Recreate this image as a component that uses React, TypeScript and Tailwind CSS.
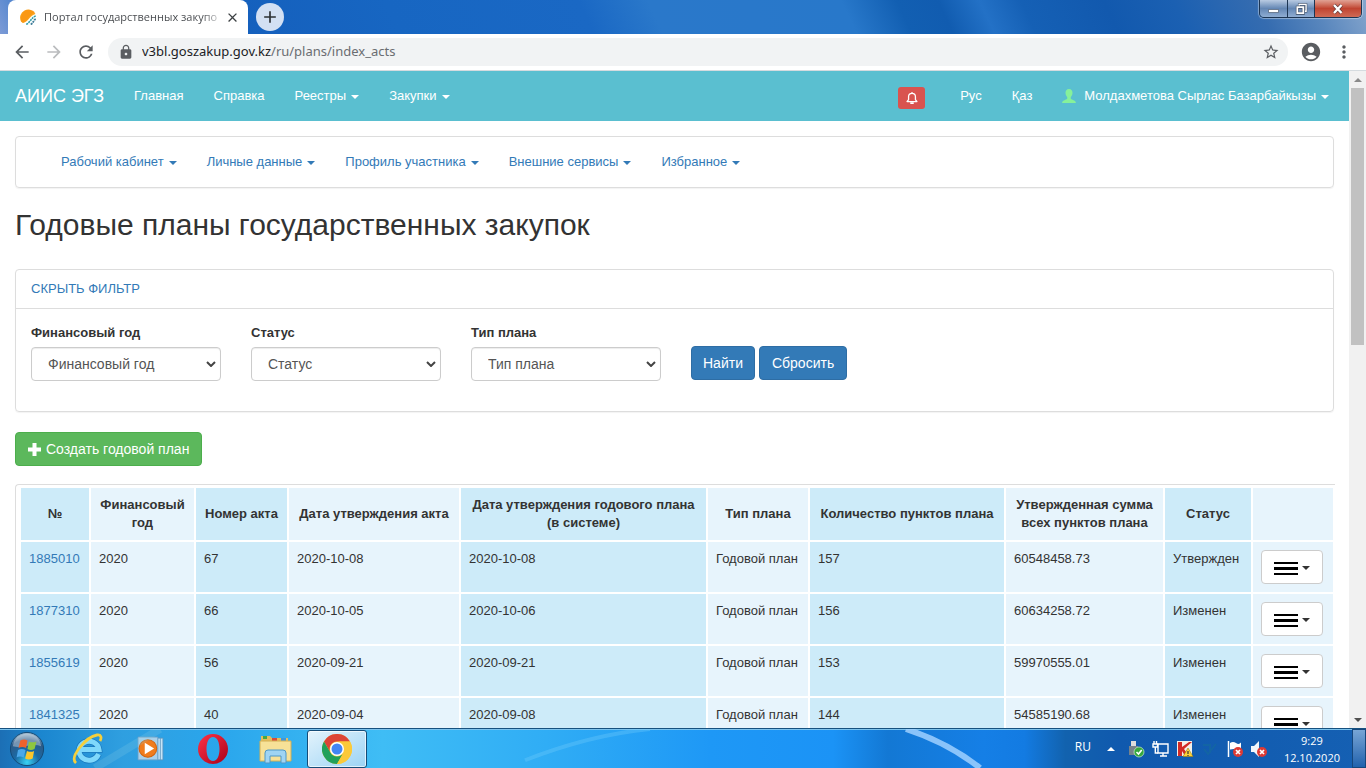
import React from "react";
import {
  MdArrowBack,
  MdArrowForward,
  MdRefresh,
  MdLock,
  MdStarBorder,
  MdAccountCircle,
  MdMoreVert,
  MdClose,
  MdAdd,
} from "react-icons/md";

function Caret({ className = "" }: { className?: string }) {
  return (
    <svg viewBox="0 0 8 4" className={"h-1 w-2 shrink-0 " + className} aria-hidden="true">
      <path d="M0 0h8L4 4z" fill="currentColor" />
    </svg>
  );
}

function BrowserTabs() {
  return (
    <header className="flex h-[34px] shrink-0 bg-[linear-gradient(65deg,#7d9bd6_0%,#3f7ccb_3%,#1560bd_18%,#1766c2_29%,#1a68c4_43%,#2a78ca_48%,#2878ca_62%,#125fb2_66%,#115cb0_69%,#2371c6_72%,#1560b5_75%,#1259ae_81%,#1b60b2_86%,#356cb0_92%,#5886bd_96%,#86a6cd_100%)]">
      <div className="ml-2 flex w-60 items-center rounded-t-lg bg-white pl-3 pr-2">
        <svg viewBox="0 0 16 16" className="h-4 w-4 shrink-0" aria-hidden="true">
          <path d="M1 12.500A8 8 0 1 1 15.500 5C10 6 8.500 13 3 14z" fill="#fba31c" />
          <path d="M1 12.500C0-1 12-1 15 3.500 9 5 8 12 3 14z" fill="#f9900f" opacity=".55" />
          <path d="M15.700 7c-4 1-5 6-9.500 8.500" stroke="#2b9aa5" strokeWidth="1.600" strokeDasharray="2 .7" fill="none" />
          <path d="M15.700 10c-2 1-2.500 4-5 5.500" stroke="#3f7e9a" strokeWidth="1.800" strokeDasharray="2 .7" fill="none" />
        </svg>
        <span className="ml-2 flex-1 whitespace-nowrap bg-linear-to-r from-[#45484c] from-90% to-[#45484c33] bg-clip-text text-[11px] text-transparent">
          Портал государственных закупо
        </span>
        <button type="button" aria-label="Закрыть вкладку" className="ml-1 grid h-4 w-4 shrink-0 place-items-center text-[#3c4043]">
          <MdClose size={15} />
        </button>
      </div>
      <button type="button" aria-label="Новая вкладка" className="ml-2 mt-[3px] grid h-7 w-7 place-items-center rounded-full bg-[#d3e0f3] text-[#2d3034]">
        <MdAdd size={20} />
      </button>
      <div className="ml-auto mr-1 flex h-[18px] overflow-hidden rounded-b-[5px] border border-t-0 border-[#1c3553] text-white shadow-[0_0_1px_1px_#ffffff66]">
        <button type="button" aria-label="Свернуть" className="grid w-7 place-items-center border-r border-[#1c3553] bg-linear-to-b from-[#b9cbe2] via-[#6487b4] to-[#8fadd2]">
          <svg viewBox="0 0 14 12" className="h-3 w-3.5"><path d="M1.500 6.500h10v3h-10z" fill="#fff" stroke="#4c5c73" strokeWidth=".7" /></svg>
        </button>
        <button type="button" aria-label="Свернуть в окно" className="grid w-[27px] place-items-center border-r border-[#1c3553] bg-linear-to-b from-[#b9cbe2] via-[#6487b4] to-[#8fadd2]">
          <svg viewBox="0 0 14 13" className="h-3 w-3.5" fill="none">
            <path d="M5 3V1.500h7.500V9H11" stroke="#3f4d62" strokeWidth="2.600" />
            <path d="M5 3V1.500h7.500V9H11" stroke="#fff" strokeWidth="1.500" />
            <path d="M3 4.500h6.500v6.500H3z" stroke="#3f4d62" strokeWidth="3.200" />
            <path d="M3 4.500h6.500v6.500H3z" stroke="#fff" strokeWidth="1.900" />
          </svg>
        </button>
        <button type="button" aria-label="Закрыть" className="grid w-[46px] place-items-center bg-linear-to-b from-[#e0a294] via-[#c04431] to-[#cf6a55]">
          <svg viewBox="0 0 14 12" className="h-3 w-3.5">
            <path d="M3 2l7.500 8M10.500 2L3 10" stroke="#5c3a3a" strokeWidth="3.600" />
            <path d="M3 2l7.500 8M10.500 2L3 10" stroke="#fff" strokeWidth="2.400" />
          </svg>
        </button>
      </div>
    </header>
  );
}

function AddressBar() {
  return (
    <div className="flex h-[37px] shrink-0 items-center border-b border-[#d5dbdf] bg-white pl-3 pr-3 text-[#5a5d61]">
      <button type="button" aria-label="Назад"><MdArrowBack size={20} /></button>
      <button type="button" aria-label="Вперёд" className="ml-3 text-[#babcbe]"><MdArrowForward size={20} /></button>
      <button type="button" aria-label="Обновить" className="ml-3"><MdRefresh size={20} /></button>
      <div className="ml-3 flex h-7 min-w-0 flex-1 items-center rounded-full bg-[#f1f3f4] pl-2.5 pr-2">
        <MdLock size={16} className="shrink-0" />
        <div className="ml-2 min-w-0 flex-1 truncate font-['Noto_Sans',sans-serif] text-[13px] text-[#6a6d71]">
          <span className="text-[#202124]">v3bl.goszakup.gov.kz</span>/ru/plans/index_acts
        </div>
        <button type="button" aria-label="Добавить в закладки"><MdStarBorder size={18} /></button>
      </div>
      <button type="button" aria-label="Профиль" className="ml-3"><MdAccountCircle size={22} /></button>
      <button type="button" aria-label="Меню" className="ml-3"><MdMoreVert size={20} /></button>
    </div>
  );
}

function SiteNav() {
  return (
    <nav className="flex h-[50px] items-center bg-[#5abfd0] px-[15px] text-[13px] text-white">
      <a href="#" className="text-lg">АИИС ЭГЗ</a>
      <a href="#" className="ml-[30px]">Главная</a>
      <a href="#" className="ml-[30px]">Справка</a>
      <a href="#" className="ml-[30px] flex items-center">Реестры<Caret className="ml-[5px] mt-0.5" /></a>
      <a href="#" className="ml-[30px] flex items-center">Закупки<Caret className="ml-[5px] mt-0.5" /></a>
      <a href="#" aria-label="Уведомления" className="ml-auto mt-1 grid h-[22px] w-[27px] place-items-center rounded-[3px] bg-[#d9534f]">
        <svg viewBox="0 0 14 16" className="h-3.5 w-3" fill="none" stroke="#fff" strokeWidth="1.500" aria-hidden="true">
          <path d="M7 1v1.500M1.200 12.200h11.600L11 9.800V6.500a4 4 0 0 0-8 0v3.300z" strokeLinejoin="round" />
          <path d="M5 14h4" strokeWidth="2" />
        </svg>
      </a>
      <a href="#" className="ml-[35px]">Рус</a>
      <a href="#" className="ml-[30px]">Қаз</a>
      <a href="#" className="ml-[30px] mr-[5px] flex items-center">
        <svg viewBox="0 0 14 14" className="mr-2 h-3.5 w-3.5" aria-hidden="true">
          <path d="M7 0c2.400 0 3.600 1.700 3.500 4-.1 1.800-.8 3.200-1.700 4v1.500c0 .7 1 .9 2.200 1.400 1.600.6 2.700.9 2.900 3.100H.1c.2-2.200 1.300-2.500 2.900-3.100 1.200-.5 2.200-.7 2.200-1.400V8c-.9-.8-1.600-2.200-1.700-4C3.400 1.700 4.600 0 7 0z" fill="#86f19a" />
        </svg>
        Молдахметова Сырлас Базарбайкызы<Caret className="ml-[5px] mt-0.5" />
      </a>
    </nav>
  );
}

const cabinetLinks = ["Рабочий кабинет", "Личные данные", "Профиль участника", "Внешние сервисы", "Избранное"];

const filters = [
  { id: "year", label: "Финансовый год" },
  { id: "status", label: "Статус" },
  { id: "type", label: "Тип плана" },
];

function FilterPanel() {
  return (
    <section className="mt-[26px] h-[143px] rounded border border-[#ddd] shadow-[0_1px_1px_#0000000d]">
      <div className="flex h-[39px] items-center border-b border-[#ddd] px-[15px]">
        <a href="#" className="text-[13px] leading-[18px] text-[#337ab7]">СКРЫТЬ ФИЛЬТР</a>
      </div>
      <form className="flex gap-[30px] px-[15px] pt-[15px]" onSubmit={(e) => e.preventDefault()}>
        {filters.map((f) => (
          <div key={f.id} className="w-[190px]">
            <label htmlFor={f.id} className="block text-[13px] leading-[18px] font-bold">{f.label}</label>
            <div className="relative mt-[5px]">
              <select id={f.id} className="block h-[34px] w-full appearance-none rounded border border-[#ccc] bg-white pl-4 text-sm text-[#555] shadow-[inset_0_1px_1px_#00000013]">
                <option>{f.label}</option>
              </select>
              <svg viewBox="0 0 10 6" className="pointer-events-none absolute right-[5px] top-3.5 h-1.5 w-2.5" fill="none" aria-hidden="true">
                <path d="M1 1l4 4 4-4" stroke="#444" strokeWidth="2" />
              </svg>
            </div>
          </div>
        ))}
        <div className="mt-[22px] flex h-[34px] gap-1">
          <button type="submit" className="rounded border border-[#2e6da4] bg-[#337ab7] px-[11px] text-sm text-white">Найти</button>
          <button type="reset" className="rounded border border-[#2e6da4] bg-[#337ab7] px-3 text-sm text-white">Сбросить</button>
        </div>
      </form>
    </section>
  );
}

const columns = [
  { title: "№", width: 68 },
  { title: "Финансовый год", width: 103 },
  { title: "Номер акта", width: 91 },
  { title: "Дата утверждения акта", width: 170 },
  { title: "Дата утверждения годового плана (в системе)", width: 245 },
  { title: "Тип плана", width: 100 },
  { title: "Количество пунктов плана", width: 194 },
  { title: "Утвержденная сумма всех пунктов плана", width: 157 },
  { title: "Статус", width: 86 },
  { title: "", width: 80 },
];

const rows = [
  ["1885010", "2020", "67", "2020-10-08", "2020-10-08", "Годовой план", "157", "60548458.73", "Утвержден"],
  ["1877310", "2020", "66", "2020-10-05", "2020-10-06", "Годовой план", "156", "60634258.72", "Изменен"],
  ["1855619", "2020", "56", "2020-09-21", "2020-09-21", "Годовой план", "153", "59970555.01", "Изменен"],
  ["1841325", "2020", "40", "2020-09-04", "2020-09-08", "Годовой план", "144", "54585190.68", "Изменен"],
];

function PlansTable() {
  return (
    <div className="-mr-px mt-[18px] rounded-tl border-l border-t border-[#ddd] pl-[3px] pt-px">
      <table className="w-full table-fixed border-separate border-spacing-0.5 text-[13px] leading-[18px]">
        <colgroup>
          {columns.map((c, i) => (
            <col key={i} style={{ width: c.width }} />
          ))}
        </colgroup>
        <thead>
          <tr>
            {columns.map((c, i) => (
              <th key={i} className="bg-[#e7f4fc] px-1 py-2 font-bold odd:bg-[#cdebf9]">{c.title}</th>
            ))}
          </tr>
        </thead>
        <tbody>
          {rows.map((r) => (
            <tr key={r[0]}>
              {r.map((cell, i) => (
                <td key={i} className="whitespace-nowrap bg-[#e7f4fc] p-2 align-top odd:bg-[#cdebf9]">
                  {i === 0 ? <a href="#" className="text-[#337ab7]">{cell}</a> : cell}
                </td>
              ))}
              <td className="bg-[#e7f4fc] p-2">
                <button type="button" aria-label="Действия" className="flex h-[34px] w-[62px] items-center justify-center gap-1 rounded border border-[#ccc] bg-white pt-0.5">
                  <svg viewBox="0 0 24 13" className="h-[13px] w-6" aria-hidden="true">
                    <path d="M0 0h24v2H0zM0 5h24v3H0zM0 11h24v2H0z" fill="#000" />
                  </svg>
                  <Caret />
                </button>
              </td>
            </tr>
          ))}
        </tbody>
      </table>
    </div>
  );
}

function Taskbar() {
  return (
    <footer className="relative flex h-10 shrink-0 items-center overflow-hidden border-t border-[#17517f] bg-[linear-gradient(90deg,#1c6fb5_0%,#1b86cf_3%,#2f9fe0_9%,#2aa6ec_16%,#3fbdf5_28%,#30adf5_40%,#1e98f6_52%,#1b93f6_61%,#1378d4_65%,#157fe6_72%,#137be2_75%,#1262ae_78%,#1059ae_82%,#1560b3_100%)] text-white shadow-[inset_0_1px_0_#7cc3ee]">
      <svg viewBox="0 0 1366 40" preserveAspectRatio="none" className="pointer-events-none absolute inset-0 h-full w-full" fill="none" aria-hidden="true">
        <path d="M906 0Q948 14 980 40" stroke="#9fd0ff" strokeWidth="6" opacity=".85" />
        <path d="M525 32Q590 6 650 0" stroke="#6fcbfb" strokeWidth="4" opacity=".35" />
        <path d="M95 40L160 0" stroke="#8fd4e6" strokeWidth="8" opacity=".2" />
      </svg>
      <button type="button" aria-label="Пуск" className="ml-2 h-9 w-[38px]">
        <svg viewBox="0 0 38 38" className="h-9 w-[38px]">
          <defs>
            <radialGradient id="orb" cx=".5" cy=".9" r=".9">
              <stop offset="0" stopColor="#39d4f5" />
              <stop offset=".4" stopColor="#1a6aa5" />
              <stop offset=".75" stopColor="#2c5a87" />
              <stop offset="1" stopColor="#a5bfd3" />
            </radialGradient>
          </defs>
          <circle cx="19" cy="19" r="17.500" fill="url(#orb)" stroke="#134872" />
          <path d="M4 16C6 5 14 3 19 3s13 2 15 13c-10-4-20 3-30 0z" fill="#fff" opacity=".35" />
          <path d="M12 10q4-2 7.500 0l-1.500 8q-4-2-8 0z" fill="#f0622c" />
          <path d="M21 11q4 2 8 0l-2 8q-4 2-7.500 0z" fill="#8ec63f" />
          <path d="M9.500 20q4-2 8 0l-2 8q-4-2-7.500 0z" fill="#4ba8ea" />
          <path d="M19 21q4 2 7.500 0l-1.500 8q-4 2-8 0z" fill="#fdc62b" />
        </svg>
      </button>
      <button type="button" aria-label="Internet Explorer" className="ml-6">
        <svg viewBox="0 0 32 32" className="h-8 w-9" fill="none">
          <path d="M26.500 21A10 9.500 0 1 1 27 16.500H9" stroke="#1b78bd" strokeWidth="6.400" />
          <path d="M26.500 21A10 9.500 0 1 1 27 16.500H9" stroke="#7fd8fb" strokeWidth="5" />
          <path d="M4 30C-3 24 14 4 25 2c4-.6 5 2.500 3 6" stroke="#f5cf3c" strokeWidth="2.800" />
        </svg>
      </button>
      <button type="button" aria-label="Проигрыватель" className="ml-[31px]">
        <svg viewBox="0 0 27 27" className="h-7 w-7">
          <path d="M20 3h5v21h-5z" fill="#c5e4f7" stroke="#5a94bd" strokeWidth=".8" />
          <path d="M22.500 3v21" stroke="#5a94bd" strokeWidth=".8" />
          <path d="M1 2h19v22H1z" fill="#a9d0ea" stroke="#6ba0c6" strokeWidth=".8" />
          <circle cx="10.500" cy="13" r="8.500" fill="#f07c1d" stroke="#d1640f" />
          <path d="M7.500 7.500l9 5.500-9 5.500z" fill="#fff" />
        </svg>
      </button>
      <button type="button" aria-label="Opera" className="ml-8">
        <svg viewBox="0 0 32 32" className="h-8 w-8">
          <defs>
            <linearGradient id="opera" x2="1" y2="1">
              <stop offset="0" stopColor="#ff3347" />
              <stop offset="1" stopColor="#a80018" />
            </linearGradient>
          </defs>
          <path fillRule="evenodd" d="M16 1a15 15 0 1 0 0 30 15 15 0 0 0 0-30zm0 3c4.300 0 6.500 5.500 6.500 12S20.300 28 16 28 9.500 22.500 9.500 16 11.700 4 16 4z" fill="url(#opera)" />
        </svg>
      </button>
      <button type="button" aria-label="Проводник" className="ml-[30px]">
        <svg viewBox="0 0 33 30" className="h-[30px] w-[33px]">
          <path d="M2 5V2h9l2 2h16v4h2v19H2z" fill="#e5bd5b" />
          <path d="M4 2h4v3H4z" fill="#42a948" />
          <path d="M13 4h5v3h-5z" fill="#d94b3d" />
          <path d="M22 4h5v3h-5z" fill="#3e96dc" />
          <path d="M1 7h31v20H1z" fill="#f7e197" stroke="#d4b055" />
          <path d="M6 29V19q0-3 3-3h15q3 0 3 3v10h-5v-7H11v7z" fill="#9fd4f3" stroke="#4e98c7" />
        </svg>
      </button>
      <button type="button" aria-label="Google Chrome" className="ml-[15px] grid h-[38px] w-[60px] place-items-center rounded-[3px] border border-[#154c78] bg-linear-to-br from-[#e3f3fc] to-[#9bd3f4] shadow-[inset_0_0_0_1px_#ffffffaa]">
        <svg viewBox="0 0 30 30" className="h-[30px] w-[30px]">
          <circle cx="15" cy="15" r="15" fill="#fbc939" />
          <path d="M2 7.500A15 15 0 0 1 28 7.500H15a7.500 7.500 0 0 0-6.500 11.200z" fill="#dc4437" />
          <path d="M2 7.500l6.500 11.200a7.500 7.500 0 0 0 13 0L15 30A15 15 0 0 1 2 7.500z" fill="#21a05a" />
          <path d="M21.500 18.700L15 30A15 15 0 0 0 28 7.500H15a7.500 7.500 0 0 1 6.500 11.200z" fill="#fbc939" />
          <circle cx="15" cy="15" r="7" fill="#fff" />
          <circle cx="15" cy="15" r="5.500" fill="#4386f3" />
        </svg>
      </button>
      <div className="ml-auto flex h-full items-center text-xs">
        <span className="mb-1">RU</span>
        <svg viewBox="0 0 8 4" className="ml-4 h-1 w-2"><path d="M0 4h8L4 0z" fill="#fff" /></svg>
        <svg viewBox="0 0 18 18" className="ml-3 h-[18px] w-[18px]">
          <path d="M4 1h5v5H4z" fill="#ddd" />
          <path d="M2 6h9v9H2z" fill="#77838b" />
          <circle cx="12" cy="12" r="5" fill="#35a83c" stroke="#cdeccd" strokeWidth=".7" />
          <path d="M9.500 12l2 2 3.200-4" stroke="#fff" strokeWidth="1.600" fill="none" />
        </svg>
        <svg viewBox="0 0 18 18" className="ml-[7px] h-[18px] w-[18px]" fill="none" stroke="#fff" strokeWidth="1.400">
          <path d="M6 4h10v9H6zM11 13v3M8 16h7" />
          <path d="M2 1v3M4.500 1v3M1 4h4.500v3H1zM3.300 7v6H6" />
        </svg>
        <svg viewBox="0 0 18 18" className="ml-1.5 h-[18px] w-[18px]">
          <path d="M1 1h15v15H1z" fill="#f3f0ea" />
          <path d="M2 2h4v5l7-5h3L8 9l5 7H9l-3-5v5H2z" fill="#d22b26" />
          <path d="M12 8l5 8.500H7z" fill="#ffd338" stroke="#9a7a14" strokeWidth=".6" />
          <path d="M12 11v3M12 15v1" stroke="#333" strokeWidth="1.200" />
        </svg>
        <svg viewBox="0 0 18 18" className="ml-[7px] h-[18px] w-[18px]"><path d="M3 9l4 5 8-10M2 5h7v8" stroke="#146a9c" strokeWidth="2" fill="none" opacity=".6" /></svg>
        <svg viewBox="0 0 18 18" className="ml-[7px] h-[18px] w-[18px]">
          <path d="M2.500 1v16" stroke="#fff" strokeWidth="1.500" />
          <path d="M4 3q3-2 6 0t5-.5v7q-3 1-5 0t-6 0z" fill="#fff" />
          <circle cx="12" cy="12" r="5" fill="#dd3a34" />
          <path d="M10 10l4 4M14 10l-4 4" stroke="#fff" strokeWidth="1.700" />
        </svg>
        <svg viewBox="0 0 18 18" className="ml-1.5 h-[18px] w-[18px]">
          <path d="M1 6h3l5-5v16l-5-5H1z" fill="#f2f6fa" />
          <circle cx="12" cy="12" r="5" fill="#dd3a34" />
          <path d="M10 10l4 4M14 10l-4 4" stroke="#fff" strokeWidth="1.700" />
        </svg>
        <div className="ml-4 whitespace-nowrap text-center text-[11px] leading-[17px]">
          9:29
          <br />
          12.10.2020
        </div>
        <button type="button" aria-label="Свернуть все окна" className="ml-3 h-full w-3.5 border border-[#16477c] bg-linear-to-b from-[#77a5d5] to-[#1f62ad]" />
      </div>
    </footer>
  );
}

export default function App() {
  return (
    <div className="flex h-screen flex-col overflow-hidden bg-white font-['Open_Sans','Noto_Sans',sans-serif]">
      <BrowserTabs />
      <AddressBar />
      <div className="flex min-h-0 flex-1">
        <main className="min-w-0 flex-1 overflow-hidden font-['Liberation_Sans',Arial,sans-serif] text-[#333]">
          <SiteNav />
          <div className="px-[15px]">
            <div className="mt-[15px] flex h-[52px] items-center gap-[30px] rounded border border-[#ddd] pl-[45px] text-[13px] text-[#337ab7] shadow-[0_1px_1px_#0000000d]">
              {cabinetLinks.map((t) => (
                <a key={t} href="#" className="flex items-center">{t}<Caret className="ml-[5px] mt-0.5" /></a>
              ))}
            </div>
            <h1 className="mt-[19px] text-3xl leading-9">Годовые планы государственных закупок</h1>
            <FilterPanel />
            <a href="#" className="mt-5 inline-flex h-[34px] items-center rounded border border-[#4cae4c] bg-[#5cb85c] px-3 text-sm text-white">
              <svg viewBox="0 0 13 13" className="mr-[5px] h-[13px] w-[13px]" aria-hidden="true">
                <path d="M4.500 0h4v4.500H13v4H8.500V13h-4V8.500H0v-4h4.500z" fill="#fff" />
              </svg>
              Создать годовой план
            </a>
            <PlansTable />
          </div>
        </main>
        <div className="flex w-[17px] flex-col items-center bg-[#f1f1f1]" aria-hidden="true">
          <span className="grid h-[17px] place-items-center text-[#8a8a8a]"><Caret className="rotate-180" /></span>
          <span className="h-[257px] w-[13px] bg-[#c1c1c1]" />
          <span className="mt-auto grid h-[17px] place-items-center text-[#505050]"><Caret /></span>
        </div>
      </div>
      <Taskbar />
    </div>
  );
}
